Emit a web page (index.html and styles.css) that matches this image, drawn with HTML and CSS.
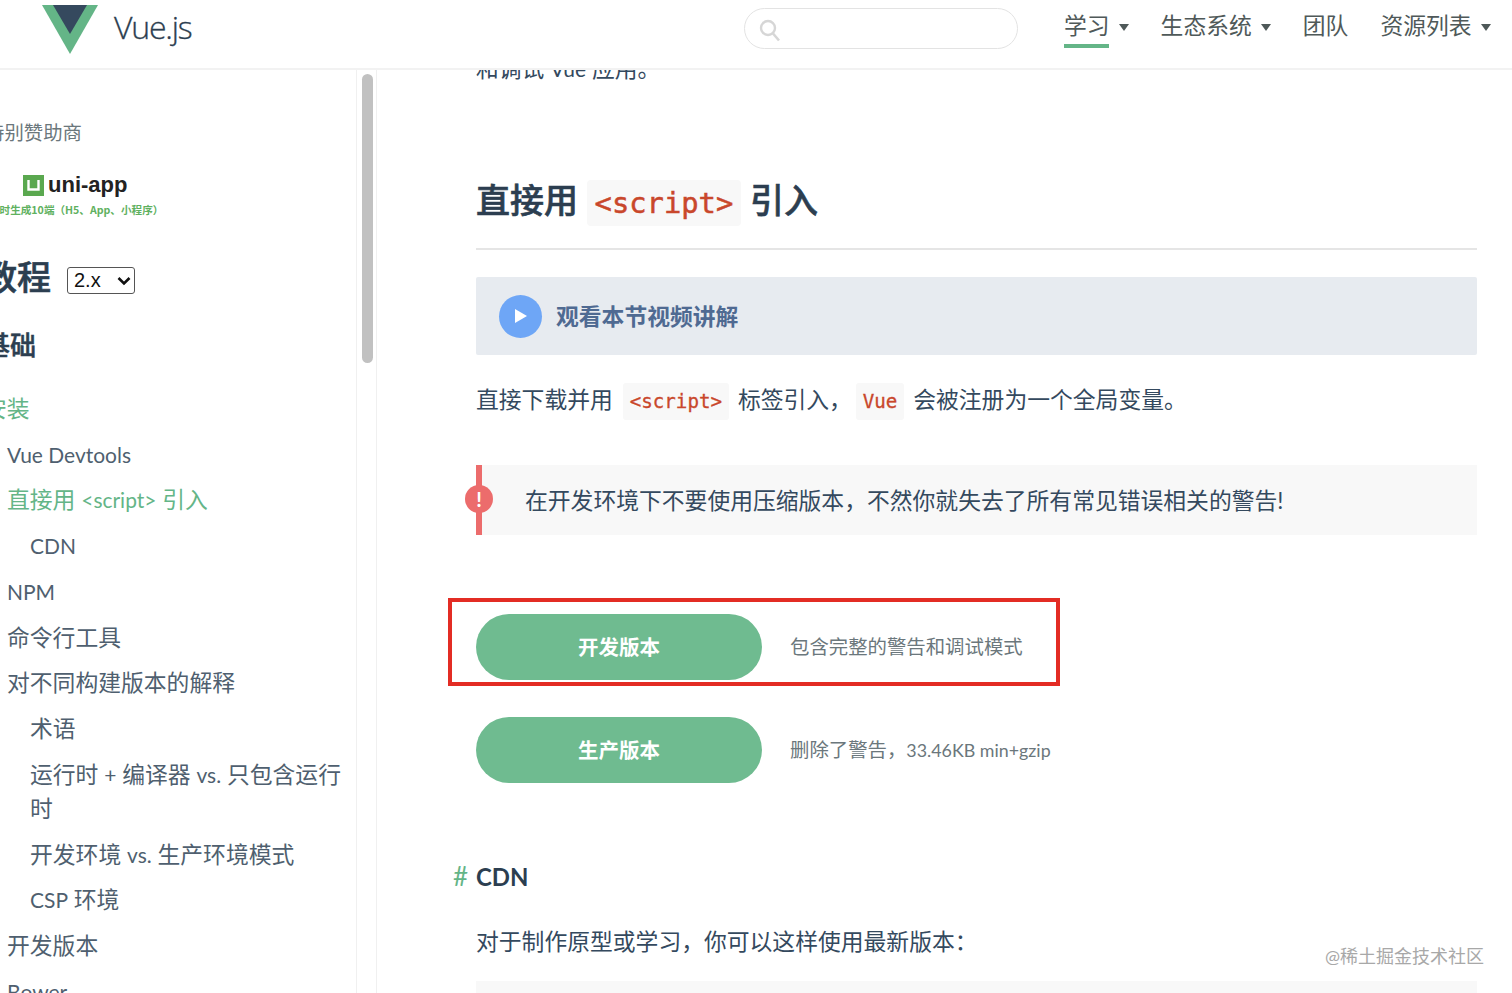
FILE: index.html
```html
<!DOCTYPE html>
<html lang="zh-CN">
	<head>
		<title>安装 — Vue.js</title>
		<meta charset="utf-8">
		<link rel="stylesheet" href="styles.css">
	</head>

	<body>

	<header class="site-header">
		<a class="logo" href="#">
			<svg class="logo-mark" viewBox="0 0 56 49" width="56" height="49">
				<polygon points="0,0 56,0 28,49" fill="#64b587"></polygon>
				<polygon points="11,0 45,0 28,29" fill="#35495e"></polygon>
			</svg>
			<span class="logo-text">Vue.js</span>
		</a>
		<div class="search">
			<svg viewBox="0 0 24 24" width="24" height="24">
				<circle cx="10" cy="10" r="7" fill="none" stroke="#d6d6d6" stroke-width="2.4"></circle>
				<line x1="15" y1="15.500" x2="21" y2="22.500" stroke="#d6d6d6" stroke-width="2.6"></line>
			</svg>
		</div>
		<nav class="nav">
			<a class="nav-item nav-current caret" href="#">学习</a>
			<a class="nav-item caret" href="#">生态系统</a>
			<a class="nav-item" href="#">团队</a>
			<a class="nav-item caret" href="#">资源列表</a>
		</nav>
	</header>

	<div class="layout">
		<aside class="sidebar">
			<div class="sponsor-title">特别赞助商</div>
			<div class="sponsor">
				<div class="uni-row">
					<svg viewBox="0 0 21 21" width="21" height="21">
						<rect width="21" height="21" fill="#5aa84f"></rect>
						<path d="M5.500 5v9.500h10V5" fill="none" stroke="#fff" stroke-width="2.400"></path>
					</svg>
					<span class="uni-name">uni-app</span>
				</div>
				<div class="uni-sub">同时生成10端（H5、App、小程序）</div>
			</div>
			<div class="guide-title">
				<h2>教程</h2>
				<select class="version"><option>2.x</option></select>
			</div>
			<h3 class="group">基础</h3>
			<ul class="menu">
				<li class="root active">安装</li>
				<li class="sub"><span class="lat">Vue Devtools</span></li>
				<li class="sub active">直接用 <span class="lat">&lt;script&gt;</span> 引入</li>
				<li class="sub-2"><span class="lat">CDN</span></li>
				<li class="sub"><span class="lat">NPM</span></li>
				<li class="sub">命令行工具</li>
				<li class="sub">对不同构建版本的解释</li>
				<li class="sub-2">术语</li>
				<li class="sub-2">运行时 <span class="lat">+</span> 编译器 <span class="lat">vs.</span> 只包含运行时</li>
				<li class="sub-2">开发环境 <span class="lat">vs.</span> 生产环境模式</li>
				<li class="sub-2"><span class="lat">CSP</span> 环境</li>
				<li class="sub">开发版本</li>
				<li class="sub"><span class="lat">Bower</span></li>
			</ul>
		</aside>
		<div class="scroll-track"><div class="scroll-thumb"></div></div>

		<main class="content">
			<p class="cut-line">和调试 <span class="lat">Vue</span> 应用。</p>

			<h2 class="section-title">直接用 <code>&lt;script&gt;</code> 引入</h2>

			<div class="video-box">
				<span class="play"><svg viewBox="0 0 12 14" width="12" height="14"><polygon points="0,0 12,7 0,14" fill="#fff"></polygon></svg></span>
				<span class="video-text">观看本节视频讲解</span>
			</div>

			<p class="intro">直接下载并用 <code>&lt;script&gt;</code> 标签引入， <code>Vue</code> 会被注册为一个全局变量。</p>

			<div class="warning">
				<span class="warning-badge">!</span>
				在开发环境下不要使用压缩版本，不然你就失去了所有常见错误相关的警告!
			</div>

			<div class="download first">
				<a class="button" href="#">开发版本</a>
				<span class="note">包含完整的警告和调试模式</span>
				<div class="highlight"></div>
			</div>
			<div class="download">
				<a class="button" href="#">生产版本</a>
				<span class="note">删除了警告，<span class="lat">33.46KB min+gzip</span></span>
			</div>

			<h3 class="cdn-title"><span class="hash">#</span><span class="lat">CDN</span></h3>
			<p class="cdn-text">对于制作原型或学习，你可以这样使用最新版本：</p>
			<div class="code-block"></div>
		</main>
	</div>

	<div class="watermark">@稀土掘金技术社区</div>

	</body>
</html>
```

FILE: styles.css
```css
html, body {
	height: 100%;
}

body {
	margin: 0;
	height: 993px;
	overflow: hidden;
	background-color: #fff;
	color: #34495e;
	font-family: Lato, "Noto Sans CJK SC", sans-serif;
	font-size: 22.8px;
	display: flex;
	flex-direction: column;
}

a {
	color: inherit;
	text-decoration: none;
}

/*Latin runs are narrower than Lato at the CJK size*/
.lat {
	font-size: 0.92em;
	line-height: 1;
}

/*Header*/
.site-header {
	flex: none;
	height: 70px;
	box-sizing: border-box;
	border-bottom: 2px solid #f2f2f2;
	display: flex;
	align-items: flex-start;
}

.logo {
	display: flex;
	width: 744px;
	padding-left: 42px;
	box-sizing: border-box;
}

.logo-mark {
	margin-top: 5px;
}

.logo-text {
	margin: 3px 0 0 16px;
	font-family: "Open Sans", sans-serif;
	font-weight: 300;
	font-size: 32px;
	line-height: 48px;
	letter-spacing: -1.2px;
	-webkit-text-stroke: 0.3px #2c3e50;
	color: #2c3e50;
}

.search {
	width: 274px;
	height: 41px;
	margin-top: 8px;
	box-sizing: border-box;
	border: 1px solid #e3e3e3;
	border-radius: 21px;
	padding: 9px 0 0 13px;
}

.search svg {
	display: block;
}

.nav {
	display: flex;
	margin-left: 46px;
	color: #4f5959;
	gap: 32px;
}

.nav-item {
	display: block;
	height: 41px;
	padding-top: 7px;
	line-height: 36px;
}

.nav-current {
	background: linear-gradient(#64b587, #64b587) no-repeat 0 100% / 45px 4px;
}

.caret::after {
	content: "";
	display: inline-block;
	margin-left: 9px;
	vertical-align: 3px;
	border-style: solid;
	border-width: 7px 5.500px 0;
	border-color: #4f5959 transparent transparent;
}

/*Sidebar*/
.layout {
	flex: 1;
	display: flex;
	min-height: 0;
}

.sidebar {
	flex: none;
	width: 357px;
	box-sizing: border-box;
	overflow: hidden;
	padding: 48px 0 0;
	border-right: 1px solid #f0f0f0;
}

.sponsor-title {
	margin-left: -15px;
	font-size: 19.400px;
	line-height: 30px;
	color: #6b777c;
}

.sponsor {
	margin-top: 26px;
}

.uni-row {
	display: flex;
	align-items: center;
	padding-left: 23px;
}

.uni-name {
	margin-left: 4px;
	font-family: "Liberation Sans", sans-serif;
	font-weight: bold;
	font-size: 22px;
	line-height: 22px;
	color: #222;
}

.uni-sub {
	margin-left: -11px;
	margin-top: 5px;
	font-family: "Noto Sans CJK SC", sans-serif;
	font-size: 10.600px;
	line-height: 18px;
	font-weight: bold;
	color: #5fb15f;
	white-space: nowrap;
}

.guide-title {
	display: flex;
	align-items: center;
	margin: 21px 0 0 -17px;
	height: 70px;
	gap: 16px;
}

.guide-title h2 {
	margin: 0;
	font-size: 34px;
	font-weight: 500;
	-webkit-text-stroke: 0.6px #2c3e50;
	color: #2c3e50;
}

.version {
	appearance: none;
	width: 68px;
	height: 27px;
	margin-top: 10px;
	padding: 0 0 0 6px;
	border: 1px solid #555;
	border-radius: 3px;
	background: #fff url("data:image/svg+xml,%3Csvg xmlns='http://www.w3.org/2000/svg' width='14' height='10'%3E%3Cpath d='M1.500 2l5.500 5.500L12.500 2' fill='none' stroke='%23111' stroke-width='2.600'/%3E%3C/svg%3E") no-repeat 49px 8px;
	color: #111;
	font-family: "Liberation Sans", sans-serif;
	font-size: 20px;
}

.group {
	margin: 15px 0 0 -16px;
	font-size: 26px;
	line-height: 40px;
	font-weight: 500;
	-webkit-text-stroke: 0.5px #2c3e50;
	color: #2c3e50;
}

.menu {
	list-style: none;
	margin: 26px 0 0;
	padding: 0;
	width: 345px;
}

.menu li {
	line-height: 34.200px;
	margin-bottom: 11.500px;
	color: #4f5f6f;
}

.menu .active {
	color: #64b587;
}

.menu .root {
	margin-left: -16px;
}

.menu .sub {
	margin-left: 7px;
}

.menu .sub-2 {
	margin-left: 30px;
}

/*Fake scrollbar column*/
.scroll-track {
	flex: none;
	width: 20px;
	box-sizing: border-box;
	padding: 4px 3px 0 5px;
	border-right: 1px solid #f0f0f0;
}

.scroll-thumb {
	width: 11px;
	height: 289px;
	border-radius: 6px;
	background-color: #c1c1c1;
}

/*Main column*/
.content {
	flex: 1;
	min-width: 0;
	overflow: hidden;
	padding: 0 35px 0 99px;
	line-height: 34px;
	color: #34495e;
}

.content p {
	margin: 0;
}

.content .cut-line {
	margin-top: -19px;
}

code {
	font-family: "DejaVu Sans Mono", "Liberation Mono", monospace;
	background-color: #f8f8f8;
	color: #c9472b;
	font-size: 19.200px;
	-webkit-text-stroke: 0.3px #c9472b;
}

.section-title {
	margin: 91px 0 0;
	padding-bottom: 21px;
	border-bottom: 2px solid #e5e5e5;
	font-size: 34px;
	line-height: 48px;
	font-weight: 500;
	-webkit-text-stroke: 0.6px #2c3e50;
	color: #2c3e50;
}

.section-title code {
	font-size: 28.800px;
	font-weight: normal;
	padding: 6px 8px;
	border-radius: 4px;
	-webkit-text-stroke: 0.5px #c9472b;
}

.video-box {
	margin-top: 27px;
	height: 78px;
	display: flex;
	align-items: center;
	padding-left: 23px;
	background-color: #e7ebf0;
	border-radius: 2px;
}

.play {
	width: 43px;
	height: 43px;
	border-radius: 50%;
	background-color: #6ea6f6;
	display: flex;
	align-items: center;
	justify-content: center;
}

.video-text {
	margin-left: 14px;
	font-weight: bold;
	color: #4f6a92;
}

.content .intro {
	margin-top: 27px;
}

.intro code {
	margin: 0 3px 0 4px;
	padding: 7px 7px;
	border-radius: 3px;
}

.intro code + code {
	margin-left: -2px;
}

.warning {
	position: relative;
	margin-top: 46px;
	height: 70px;
	box-sizing: border-box;
	line-height: 70px;
	padding-left: 43px;
	border-left: 6px solid #ec6c6c;
	background-color: #f8f8f8;
}

.warning-badge {
	position: absolute;
	left: -17px;
	top: 20px;
	width: 28px;
	height: 28px;
	border-radius: 50%;
	background-color: #ec6c6c;
	color: #fff;
	font-size: 20px;
	font-weight: bold;
	line-height: 28px;
	text-align: center;
}

.download {
	position: relative;
	display: flex;
	align-items: center;
	height: 66px;
	margin-top: 37px;
}

.download.first {
	margin-top: 79px;
}

.button {
	flex: none;
	width: 286px;
	height: 66px;
	border-radius: 33px;
	background-color: #6fbb90;
	color: #fff;
	font-size: 20.500px;
	font-weight: bold;
	line-height: 66px;
	text-align: center;
}

.note {
	margin-left: 28px;
	font-size: 19.400px;
	color: #6b777c;
}

.highlight {
	position: absolute;
	left: -28px;
	top: -16px;
	width: 612px;
	height: 88px;
	box-sizing: border-box;
	border: 4px solid #e32c24;
}

.cdn-title {
	position: relative;
	margin: 73px 0 0;
	font-size: 26px;
	line-height: 40px;
	font-weight: bold;
	color: #2c3e50;
}

.hash {
	position: absolute;
	left: -23px;
	color: #64b587;
	font-weight: normal;
}

.content .cdn-text {
	margin-top: 28px;
}

.code-block {
	margin-top: 23px;
	height: 60px;
	background-color: #f8f8f8;
}

.watermark {
	position: absolute;
	left: 1325px;
	top: 943px;
	font-size: 18px;
	line-height: 26px;
	color: #a8a8a8;
}
```
